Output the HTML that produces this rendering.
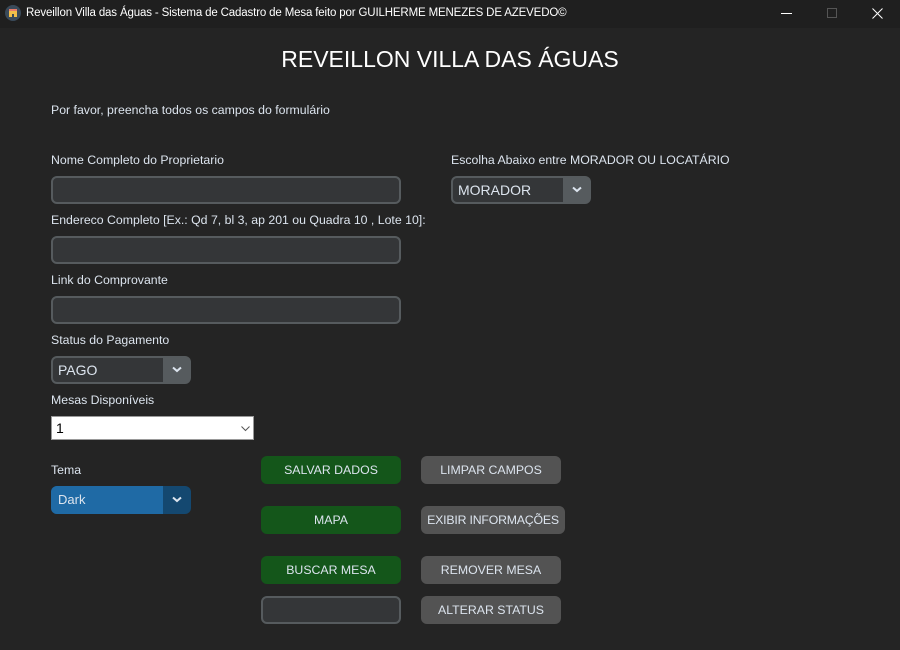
<!DOCTYPE html>
<html><head><meta charset="utf-8">
<style>
*{margin:0;padding:0;box-sizing:border-box}
body{width:900px;height:650px;background:#242424;font-family:"Liberation Sans",Arial,sans-serif;color:#dce4ee;position:relative;overflow:hidden}
.a{position:absolute}
.tb{left:0;top:0;width:900px;height:28px;background:#1f1f1f;color:#fff;font-size:11.5px;letter-spacing:-0.15px}
.lbl{font-size:12.3px;color:#dce4ee;white-space:nowrap}
.ent{background:#343638;border:2px solid #565b5e;border-radius:6px;height:28px;width:350px}
.cb{height:28px;width:140px;border-radius:6px;background:#565b5e}
.cb .in{position:absolute;left:2px;top:2px;width:110px;height:24px;background:#343638;border-radius:4px 0 0 4px;font-size:14px;line-height:24px;padding-left:5px;color:#dce4ee}
.cb svg{position:absolute;left:121px;top:10px}
.btn{height:28px;width:140px;border-radius:6px;font-size:12.3px;text-align:center;line-height:28px;color:#dce4ee}
.g{background:#14561a}
.y{background:#535353}
</style></head><body>
<div class="a tb">
  <svg class="a" style="left:5px;top:5px" width="16" height="16" viewBox="0 0 16 16"><circle cx="8" cy="8" r="8" fill="#3a4a5a"/><rect x="4" y="4" width="8" height="8" fill="#f2c04a"/><rect x="4" y="4" width="8" height="2" fill="#e87a6a"/><rect x="7" y="9" width="2" height="3" fill="#3a4a5a"/></svg>
  <div class="a" style="left:26px;top:7px">Reveillon Villa das Águas - Sistema de Cadastro de Mesa feito por GUILHERME MENEZES DE AZEVEDO©</div>
  <div class="a" style="left:781px;top:13px;width:11px;height:1px;background:#fff"></div>
  <div class="a" style="left:827px;top:8px;width:10px;height:10px;border:1px solid #555"></div>
  <svg class="a" style="left:872px;top:8px" width="11" height="11"><path d="M0.5 0.5L10.5 10.5M10.5 0.5L0.5 10.5" stroke="#fff" stroke-width="1"/></svg>
</div>
<div class="a" style="left:0;top:46px;width:900px;text-align:center;font-size:23px;color:#fff">REVEILLON VILLA DAS ÁGUAS</div>
<div class="a lbl" style="left:51px;top:103px">Por favor, preencha todos os campos do formulário</div>

<div class="a lbl" style="left:51px;top:153px">Nome Completo do Proprietario</div>
<div class="a ent" style="left:51px;top:176px"></div>
<div class="a lbl" style="left:51px;top:213px">Endereco Completo [Ex.: Qd 7, bl 3, ap 201 ou Quadra 10 , Lote 10]:</div>
<div class="a ent" style="left:51px;top:236px"></div>
<div class="a lbl" style="left:51px;top:273px">Link do Comprovante</div>
<div class="a ent" style="left:51px;top:296px"></div>
<div class="a lbl" style="left:51px;top:333px">Status do Pagamento</div>
<div class="a cb" style="left:51px;top:356px"><div class="in">PAGO</div><svg width="10" height="7"><path d="M1 1.5L5 5L9 1.5" stroke="#dce4ee" stroke-width="2" fill="none"/></svg></div>

<div class="a lbl" style="left:451px;top:153px">Escolha Abaixo entre MORADOR OU LOCATÁRIO</div>
<div class="a cb" style="left:451px;top:176px"><div class="in">MORADOR</div><svg width="10" height="7"><path d="M1 1.5L5 5L9 1.5" stroke="#dce4ee" stroke-width="2" fill="none"/></svg></div>

<div class="a lbl" style="left:51px;top:393px">Mesas Disponíveis</div>
<div class="a" style="left:51px;top:416px;width:203px;height:24px;background:#fff;border:1px solid #999;font-size:14px;color:#000;line-height:22px;padding-left:4px">1
  <svg class="a" style="left:189px;top:9px" width="9" height="6"><path d="M0.5 0.5L4.5 4.5L8.5 0.5" stroke="#555" fill="none"/></svg></div>

<div class="a lbl" style="left:51px;top:463px">Tema</div>
<div class="a cb" style="left:51px;top:486px;background:#144870"><div class="in" style="left:0;top:0;width:112px;height:28px;line-height:27px;background:#1f6aa5;border-radius:6px 0 0 6px;font-size:13px;padding-left:7px">Dark</div><svg width="10" height="7"><path d="M1 1.5L5 5L9 1.5" stroke="#dce4ee" stroke-width="2" fill="none"/></svg></div>

<div class="a btn g" style="left:261px;top:456px">SALVAR DADOS</div>
<div class="a btn y" style="left:421px;top:456px">LIMPAR CAMPOS</div>
<div class="a btn g" style="left:261px;top:506px">MAPA</div>
<div class="a btn y" style="left:421px;top:506px;width:144px;letter-spacing:-0.2px">EXIBIR INFORMAÇÕES</div>
<div class="a btn g" style="left:261px;top:556px">BUSCAR MESA</div>
<div class="a btn y" style="left:421px;top:556px">REMOVER MESA</div>
<div class="a ent" style="left:261px;top:596px;width:140px"></div>
<div class="a btn y" style="left:421px;top:596px">ALTERAR STATUS</div>
</body></html>
